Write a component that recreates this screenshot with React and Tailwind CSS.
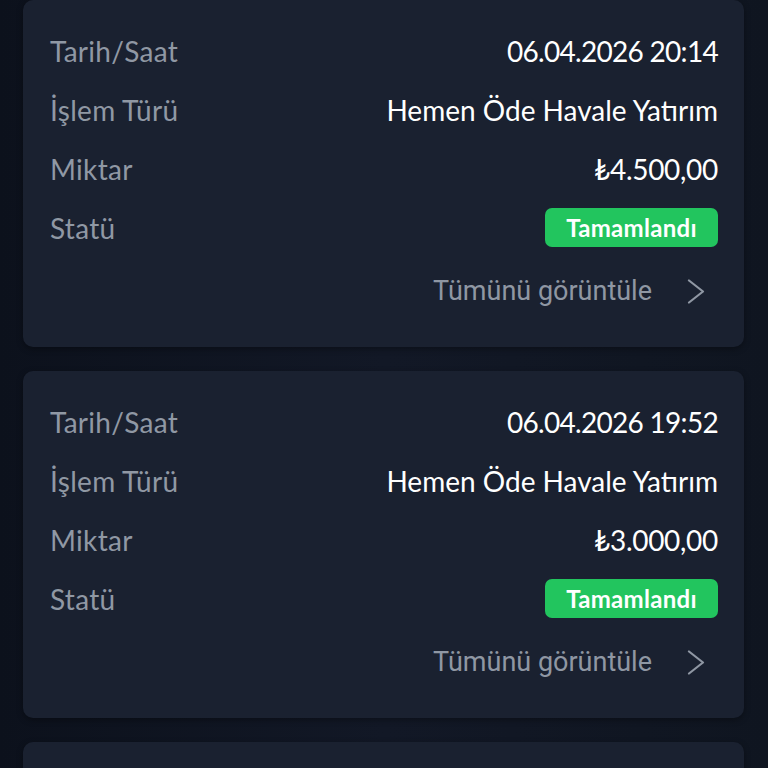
import React from "react";

const items = [
  { date: "06.04.2026 20:14", type: "Hemen Öde Havale Yatırım", amount: "₺4.500,00" },
  { date: "06.04.2026 19:52", type: "Hemen Öde Havale Yatırım", amount: "₺3.000,00" },
  { date: "06.04.2026 19:30", type: "Hemen Öde Havale Yatırım", amount: "₺2.000,00" },
];

function Row({ label, children }) {
  return (
    <div className="flex h-[59px] items-center justify-between">
      <span className="text-[28px] text-[#9098a4] tracking-[0.3px]">{label}</span>
      {children}
    </div>
  );
}

function Card({ item }) {
  return (
    <div className="rounded-[10px] bg-[#1a2130] pl-[27px] pr-[26px] pt-[21px] pb-[22px] shadow-[0_2px_6px_rgba(0,0,0,0.35)]">
      <Row label="Tarih/Saat">
        <span className="text-[28px] text-white tracking-[-0.7px]">{item.date}</span>
      </Row>
      <Row label="İşlem Türü">
        <span className="text-[28px] text-white">{item.type}</span>
      </Row>
      <Row label="Miktar">
        <span className="text-[28px] text-white tracking-[-0.3px]">{item.amount}</span>
      </Row>
      <Row label="Statü">
        <span className="flex h-[39px] w-[173px] items-center justify-center rounded-[7px] bg-[#22c55e] text-[24px] font-bold text-white tracking-[0.3px]">
          Tamamlandı
        </span>
      </Row>
      <div className="flex h-[68px] items-center justify-end">
        <span className="text-[27px] text-[#8f97a3]" style={{ fontFamily: "Roboto, sans-serif" }}>Tümünü görüntüle</span>
        <svg className="ml-[35px] mr-[13px]" width="18" height="25" viewBox="0 0 18 25" fill="none">
          <polyline points="2,1.5 16,12.5 2,23.5" stroke="#8f97a3" strokeWidth="2.2" strokeLinecap="round" strokeLinejoin="round" />
        </svg>
      </div>
    </div>
  );
}

export default function App() {
  return (
    <div
      className="h-[768px] w-[768px] overflow-hidden bg-gradient-to-r from-[#0c111c] via-[#121826] to-[#0f1520]"
      style={{ fontFamily: "Lato, 'Noto Sans', sans-serif" }}
    >
      <div className="flex flex-col gap-[24px] pl-[23px] pr-[24px]">
        {items.map((it, i) => (
          <Card key={i} item={it} />
        ))}
      </div>
    </div>
  );
}
